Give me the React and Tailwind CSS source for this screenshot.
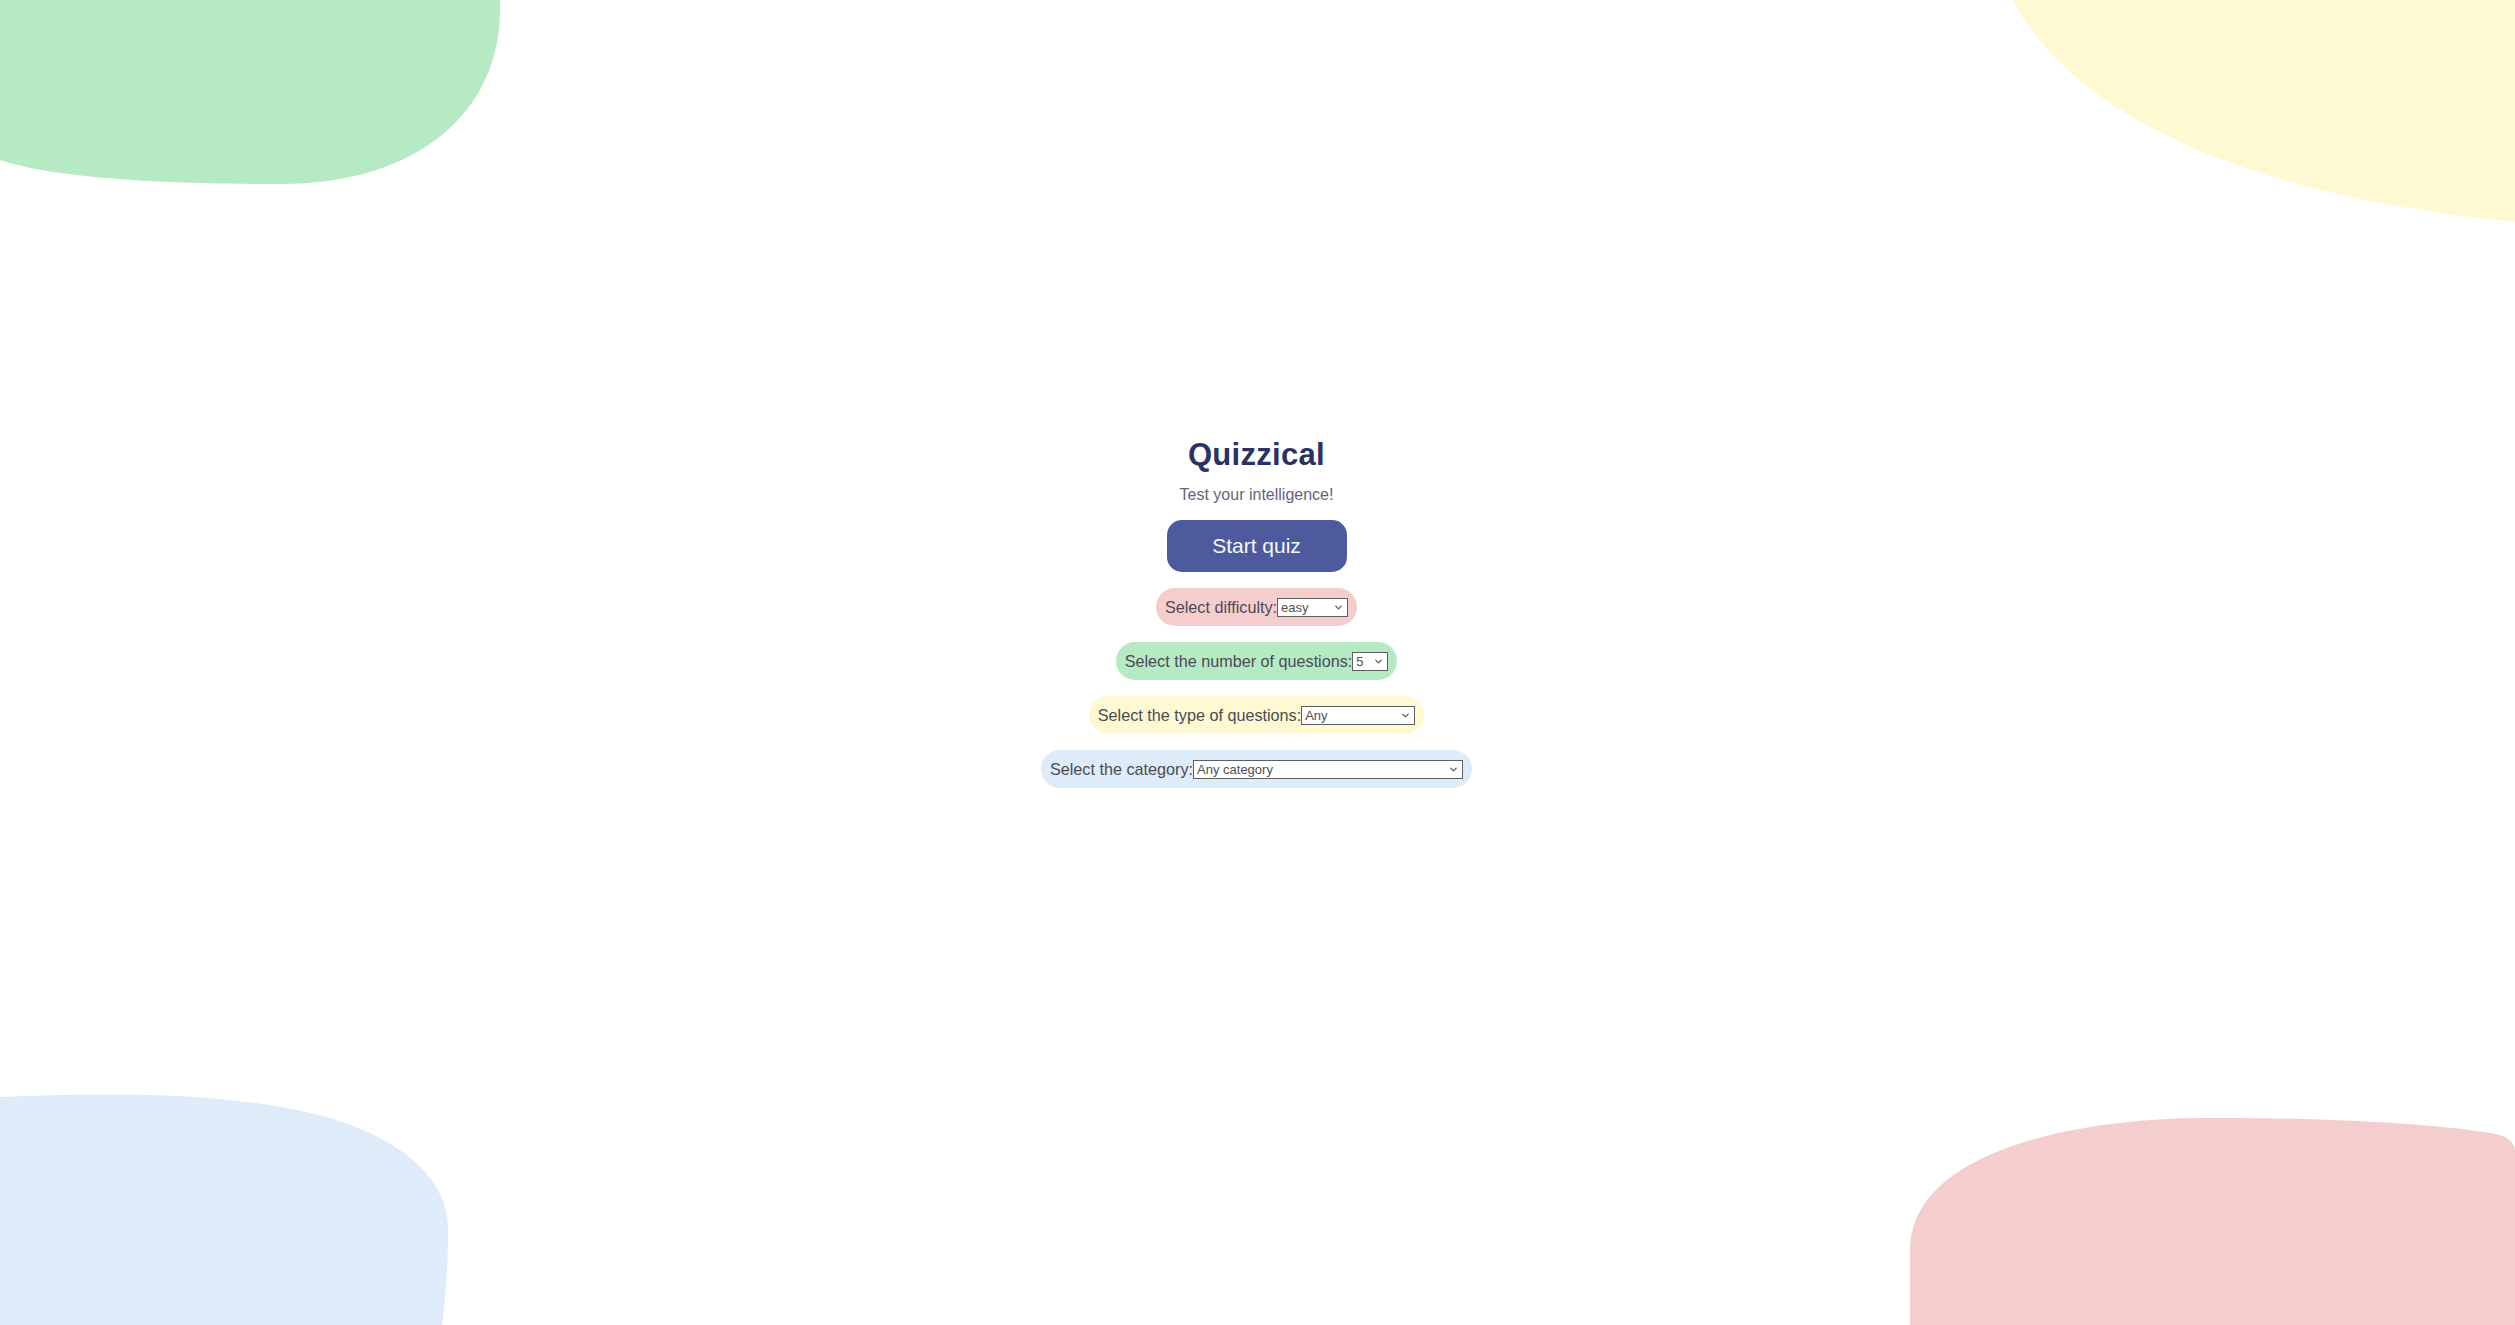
import { useState } from 'react';
import { ChevronDown } from 'lucide-react';

const pills = [
  {
    label: 'Select difficulty:',
    bg: 'bg-[#f5cdcd]',
    width: 'w-[71px]',
    options: ['easy', 'medium', 'hard'],
  },
  {
    label: 'Select the number of questions:',
    bg: 'bg-[#b6eac4]',
    width: 'w-[36px]',
    options: ['5', '10', '15', '20'],
  },
  {
    label: 'Select the type of questions:',
    bg: 'bg-[#fef9d3]',
    width: 'w-[114px]',
    options: ['Any', 'Multiple Choice', 'True / False'],
  },
  {
    label: 'Select the category:',
    bg: 'bg-[#deebf8]',
    width: 'w-[270px]',
    options: ['Any category', 'General Knowledge', 'Entertainment: Books', 'Science & Nature'],
  },
];

function Blobs() {
  return (
    <svg
      className="absolute inset-0 w-full h-full pointer-events-none"
      viewBox="0 0 2515 1325"
      preserveAspectRatio="none"
    >
      {/* top left */}
      <path d="M0 0 H500 V10 C500 110 420 184 280 184 C180 184 60 180 0 160 Z" fill="#b6eac4" />
      {/* top right */}
      <path d="M2012 0 C2075 115 2240 195 2515 222 V0 Z" fill="#fef9d3" />
      {/* bottom left */}
      <path d="M0 1097 C100 1093 230 1090 330 1118 C420 1146 448 1190 448 1230 C448 1270 445 1300 442 1325 H0 Z" fill="#deebf8" />
      {/* bottom right */}
      <path d="M1910 1325 V1250 C1910 1160 2050 1120 2200 1118 C2330 1117 2450 1125 2500 1135 Q2515 1140 2515 1152 V1325 Z" fill="#f4cdcd" />
    </svg>
  );
}

export default function App() {
  const [values, setValues] = useState(pills.map((p) => p.options[0]));

  return (
    <div className="relative w-full h-[1325px] overflow-hidden bg-white font-['Liberation_Sans',Arial,sans-serif]">
      <Blobs />
      <div className="relative flex flex-col items-center pt-[436px] pr-[2px]">
        <h1 className="text-[31px] leading-[38px] font-bold tracking-[0.3px] text-[#293264]">Quizzical</h1>
        <p className="mt-[11px] text-[16px] leading-[20px] text-[#62657e]">Test your intelligence!</p>
        <button className="mt-[15px] w-[180px] h-[52px] rounded-[15px] bg-[#4d5b9e] text-[#f5f7fb] text-[21px] cursor-pointer">
          Start quiz
        </button>

        <div className="mt-[16px] flex flex-col items-center gap-[16px]">
          {pills.map((p, idx) => (
            <div key={idx} className={`flex items-center h-[38px] px-[9px] rounded-full ${p.bg}`}>
              <span className="text-[16.2px] text-[#4b4b55]">{p.label}</span>
              <div className="relative flex">
                <select
                  value={values[idx]}
                  onChange={(e) => {
                    const next = [...values];
                    next[idx] = e.target.value;
                    setValues(next);
                  }}
                  className={`${p.width} h-[19px] pl-[3px] pr-[14px] appearance-none border border-[#5f5f5f] bg-white text-[13px] leading-[17px] text-[#505050]`}
                >
                  {p.options.map((o) => (
                    <option key={o}>{o}</option>
                  ))}
                </select>
                <ChevronDown
                  size={11}
                  strokeWidth={2.6}
                  className="absolute right-[4px] top-[4px] text-[#555] pointer-events-none"
                />
              </div>
            </div>
          ))}
        </div>
      </div>
    </div>
  );
}
